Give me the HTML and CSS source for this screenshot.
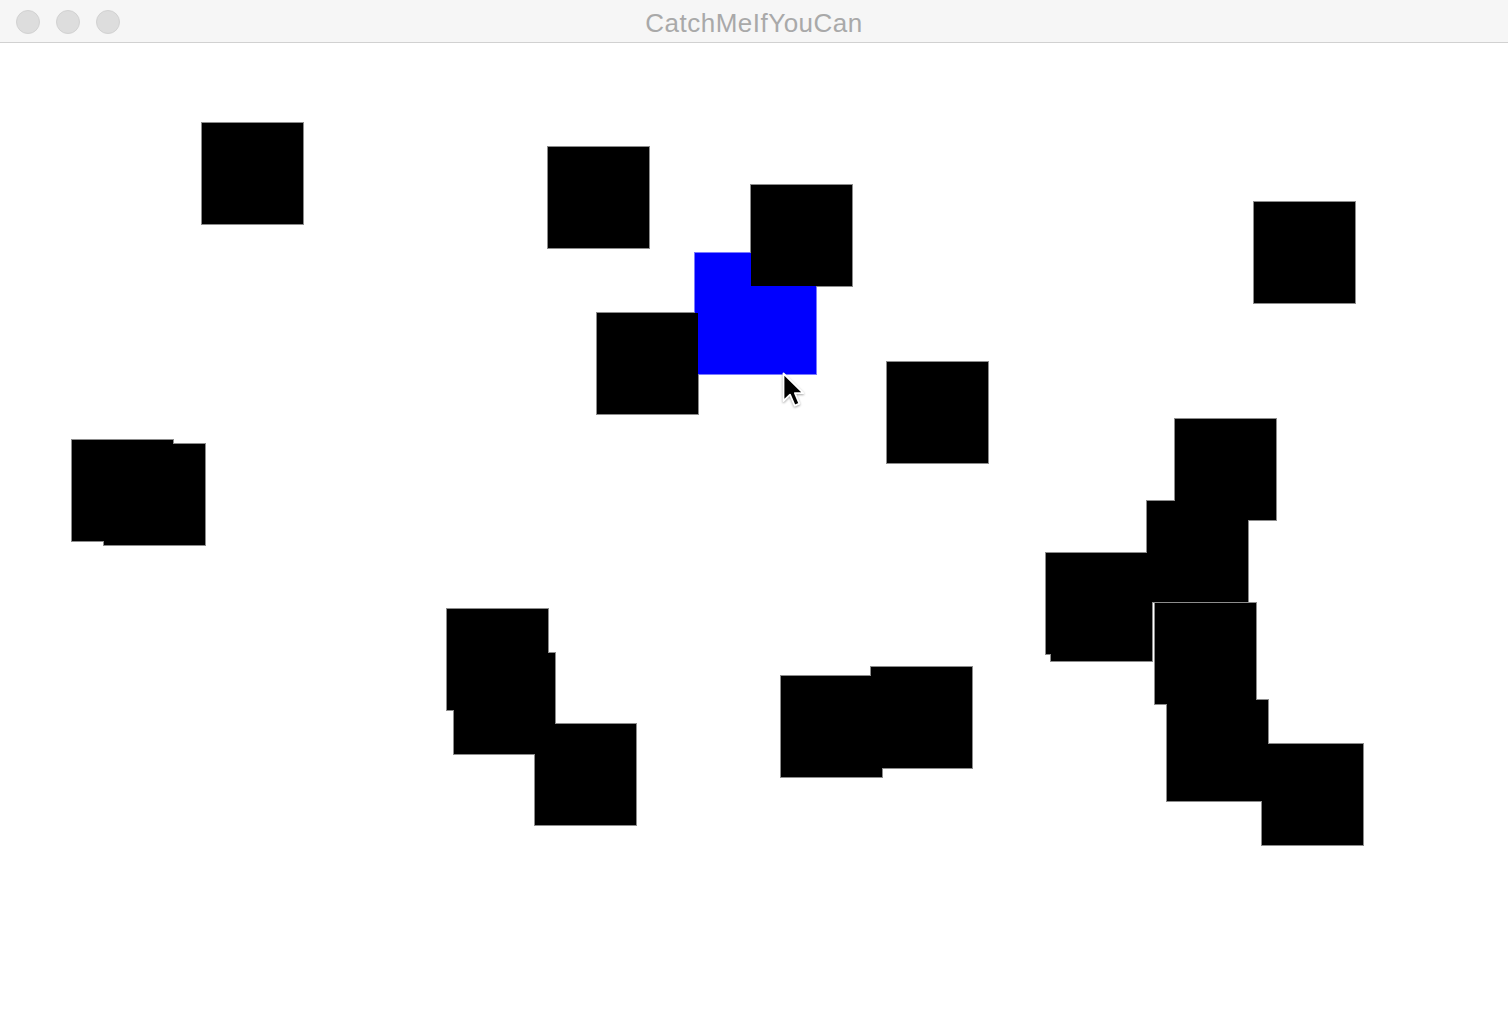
FILE: index.html
```html
<!DOCTYPE html>
<html lang="en">
<head>
<meta charset="utf-8">
<title>CatchMeIfYouCan</title>
<link rel="stylesheet" href="styles.css">
</head>
<body>
<div class="window">
  <header class="titlebar">
    <div class="lights">
      <span class="light"></span>
      <span class="light"></span>
      <span class="light"></span>
    </div>
    <div class="title">CatchMeIfYouCan</div>
  </header>
  <main class="board">
    <div class="sq target" style="left:695px;top:210px"></div>
    <div class="sq" style="left:202px;top:80px"></div>
    <div class="sq" style="left:548px;top:104px"></div>
    <div class="sq" style="left:751px;top:142px"></div>
    <div class="sq" style="left:597px;top:270px"></div>
    <div class="sq" style="left:887px;top:319px"></div>
    <div class="sq" style="left:1254px;top:159px"></div>
    <div class="sq" style="left:72px;top:397px"></div>
    <div class="sq" style="left:104px;top:401px"></div>
    <div class="sq" style="left:1175px;top:376px"></div>
    <div class="sq" style="left:1147px;top:458px"></div>
    <div class="sq" style="left:1046px;top:510px"></div>
    <div class="sq" style="left:1051px;top:517px"></div>
    <div class="sq" style="left:1155px;top:560px"></div>
    <div class="sq" style="left:1167px;top:657px"></div>
    <div class="sq" style="left:1262px;top:701px"></div>
    <div class="sq" style="left:447px;top:566px"></div>
    <div class="sq" style="left:454px;top:610px"></div>
    <div class="sq" style="left:535px;top:681px"></div>
    <div class="sq" style="left:781px;top:633px"></div>
    <div class="sq" style="left:871px;top:624px"></div>
    <svg class="cursor" style="left:782px;top:329px" width="26" height="38" viewBox="0 0 26 38">
      <path d="M1.5 1.5 L1.5 29 L8 22.7 L12.7 33.6 L17.4 31.6 L12.9 21.1 L21.3 21.1 Z" fill="#000" stroke="#fff" stroke-width="1.8" stroke-linejoin="round"/>
    </svg>
  </main>
</div>
</body>
</html>
```
FILE: styles.css
```css
html, body {
  margin: 0;
  padding: 0;
  background: #ffffff;
}

.window {
  width: 1508px;
  height: 1028px;
  display: flex;
  flex-direction: column;
  overflow: hidden;
}

.titlebar {
  position: relative;
  height: 42px;
  flex: 0 0 auto;
  background: #f6f6f6;
  border-bottom: 1px solid #d1d1d1;
  display: flex;
  align-items: center;
  justify-content: center;
}

.lights {
  position: absolute;
  left: 16px;
  top: 10px;
  display: flex;
  gap: 16px;
}

.light {
  width: 22px;
  height: 22px;
  border-radius: 50%;
  background: #dddddd;
  border: 1px solid #d2d2d2;
}

.title {
  font-family: "Liberation Sans", Arial, sans-serif;
  font-size: 26px;
  letter-spacing: 0.5px;
  color: #a9a9a9;
  margin-top: 4px;
}

.board {
  position: relative;
  z-index: 0;
  flex: 1 1 auto;
  background: #ffffff;
}

.sq {
  position: absolute;
  width: 101px;
  height: 101px;
  background: #000000;
}

.sq::before {
  content: "";
  position: absolute;
  inset: -1px;
  background: #8c8c8c;
  z-index: -1;
}

.sq.target {
  width: 121px;
  height: 121px;
  background: #0000ff;
}

.sq.target::before {
  background: #7a7aff;
}

.cursor {
  position: absolute;
  z-index: 5;
  filter: drop-shadow(0 1px 1px rgba(0, 0, 0, 0.35));
}
```
